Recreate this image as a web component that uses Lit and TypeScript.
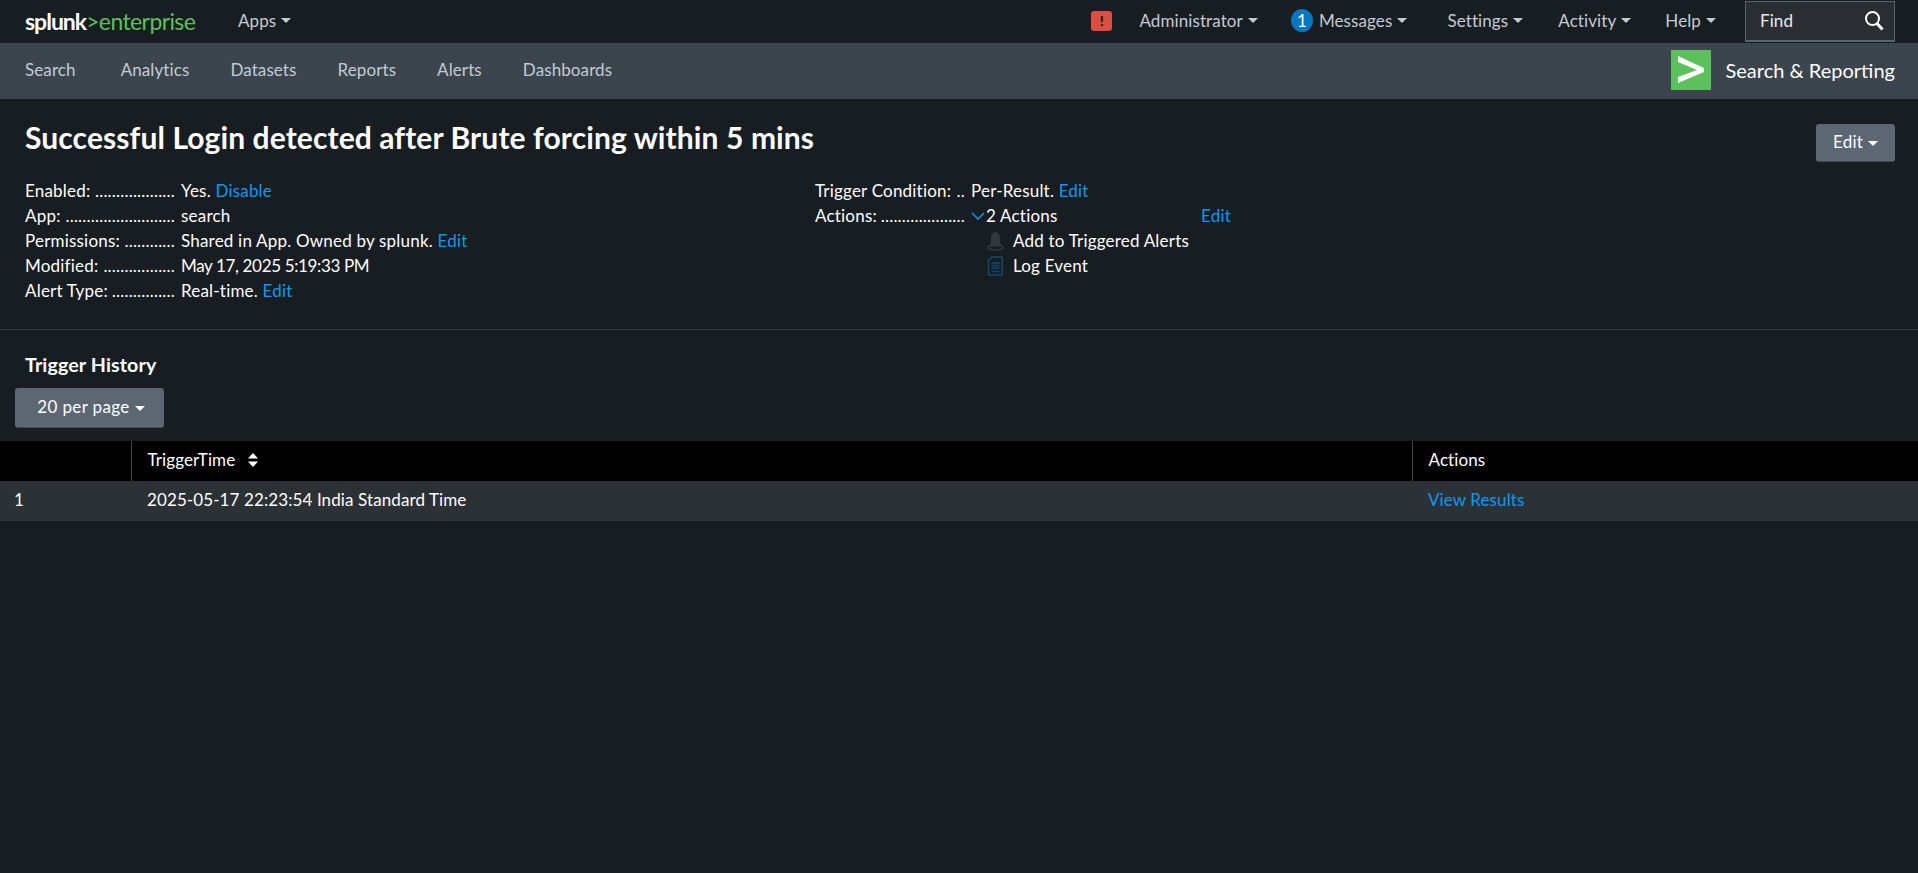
import { LitElement, html, css, svg } from "lit";
import { customElement } from "lit/decorators.js";

const caret = html`<span class="caret"></span>`;
const dots = (n: number) => ".".repeat(n);

const leftRows = [
  { label: "Enabled:", dots: 19, value: html`Yes. <a>Disable</a>` },
  { label: "App:", dots: 26, value: html`search` },
  { label: "Permissions:", dots: 12, value: html`Shared in App. Owned by splunk. <a>Edit</a>` },
  { label: "Modified:", dots: 17, value: html`<span class="tight">May 17, 2025 5:19:33 PM</span>` },
  { label: "Alert Type:", dots: 15, value: html`Real-time. <a>Edit</a>` },
];

const bell = svg`<svg width="17" height="20" viewBox="0 0 17 20"><path d="M8.5 1C5.5 1 4 3.5 4 6.5V10.500C4 12.500 3 14 1.500 15.500H15.500C14 14 13 12.500 13 10.500V6.500C13 3.500 11.500 1 8.500 1Z" fill="#33383c"/><ellipse cx="8.500" cy="16.500" rx="7.500" ry="2.500" fill="none" stroke="#33383c" stroke-width="1.500"/></svg>`;

const logIcon = svg`<svg width="17" height="20" viewBox="0 0 17 20" fill="none" stroke="#0f4c71" stroke-width="1.500"><path d="M5 1H15.200V19H1.500V4.500Z"/><path d="M4.500 7H12.500M4.500 9.500H12.500M4.500 12H12.500M4.500 15.500H12.500"/></svg>`;

@customElement("app-root")
export class AppRoot extends LitElement {
  static styles = css`
    :host {
      display: block;
      min-height: 873px;
      background: #171d21;
      color: #fff;
      font-family: Lato, "Liberation Sans", sans-serif;
      font-size: 17px;
      letter-spacing: 0.1px;
    }

    a {
      color: #0d99f2;
      text-decoration: none;
    }

    .caret {
      display: inline-block;
      width: 0;
      height: 0;
      margin-left: 5px;
      vertical-align: middle;
      border-left: 5px solid transparent;
      border-right: 5px solid transparent;
      border-top: 5px solid currentColor;
    }

    /* top bar */
    .topbar {
      display: flex;
      align-items: center;
      box-sizing: border-box;
      height: 43px;
      padding: 0 23px 2px 25px;
      color: #c3cbd4;
    }
    .logo {
      display: flex;
      align-items: baseline;
      width: 213px;
      font-size: 23px;
      letter-spacing: -0.6px;
    }
    .logo b {
      color: #fff;
      font-weight: 700;
      letter-spacing: -1px;
    }
    .logo span {
      color: #5cc05c;
    }
    .spacer {
      flex: 1;
    }
    .alert {
      display: flex;
      align-items: center;
      justify-content: center;
      width: 21px;
      height: 20px;
      margin-right: 27px;
      border-radius: 3px;
      background: #dc4e41;
      color: #171d21;
      font-size: 14px;
      font-weight: 900;
    }
    .menu {
      display: flex;
      align-items: center;
      margin-right: 34px;
      white-space: nowrap;
    }
    .menu.admin {
      margin-right: 33px;
    }
    .menu.messages {
      margin-right: 40px;
    }
    .menu.settings {
      margin-right: 35px;
    }
    .menu.last {
      margin-right: 29px;
    }
    .badge {
      display: flex;
      align-items: center;
      justify-content: center;
      width: 22px;
      height: 23px;
      margin-right: 6px;
      border-radius: 50%;
      background: #0877c1;
      color: #fff;
    }
    .find {
      display: flex;
      align-items: center;
      justify-content: space-between;
      box-sizing: border-box;
      width: 150px;
      height: 41px;
      margin: 2px 0 0;
      padding: 0 10px 2px 14px;
      border: 1px solid #596370;
      border-bottom-width: 2px;
      background: #2a2e33;
      color: #e8ebee;
    }

    /* app bar */
    .appbar {
      display: flex;
      align-items: center;
      box-sizing: border-box;
      height: 56px;
      padding: 0 23px 0 25px;
      background: #3c444d;
      color: #c3cbd4;
    }
    .appbar nav {
      display: flex;
      gap: 41px;
      margin-bottom: 3px;
    }
    .appbar nav span:first-child {
      margin-right: 4px;
    }
    .app-title {
      display: flex;
      align-items: center;
      gap: 15px;
      margin-bottom: 2px;
      color: #fff;
      font-size: 20px;
      letter-spacing: 0;
    }
    .app-mark {
      display: block;
      width: 40px;
      height: 40px;
    }

    /* details */
    .details {
      padding: 25px 23px 26px 25px;
      border-bottom: 1px solid #33393f;
      letter-spacing: 0.2px;
    }
    .title-row {
      display: flex;
      align-items: flex-start;
      justify-content: space-between;
      height: 54px;
    }
    h1 {
      margin: -1px 0 0;
      font-size: 30px;
      line-height: 28px;
      font-weight: 700;
      letter-spacing: 0.1px;
    }
    .btn {
      box-sizing: border-box;
      padding: 0 0 3px;
      border: 0;
      border-bottom: 1px solid #454c55;
      border-radius: 3px;
      background: #5c6773;
      color: #fff;
      font: inherit;
      letter-spacing: inherit;
    }
    .edit-btn {
      width: 79px;
      height: 38px;
    }
    .columns {
      display: grid;
      grid-template-columns: 790px 1fr;
    }
    .row {
      display: flex;
      height: 25px;
      line-height: 25px;
      white-space: nowrap;
    }
    .label {
      display: flex;
      justify-content: space-between;
      flex: none;
      width: 150px;
      margin-right: 6px;
    }
    .tight {
      letter-spacing: -0.35px;
    }
    .actions-col {
      display: flex;
      width: 260px;
      justify-content: space-between;
    }
    .action-count {
      display: flex;
    }
    .chevron {
      flex: none;
      display: block;
      align-self: center;
      margin-right: 1px;
    }
    .action {
      display: flex;
      align-items: center;
      gap: 9px;
      padding-left: 172px;
    }

    /* history */
    h2 {
      margin: 24px 0 12px 25px;
      font-size: 19.7px;
      line-height: 22px;
      font-weight: 700;
    }
    .per-page {
      display: block;
      width: 149px;
      height: 40px;
      margin: 0 0 13px 15px;
      padding-left: 3px;
      letter-spacing: 0.35px;
    }
    table {
      width: 100%;
      border-collapse: collapse;
      table-layout: fixed;
    }
    .col-index {
      width: 131px;
    }
    .col-time {
      width: 1281px;
    }
    th,
    td {
      box-sizing: border-box;
      height: 40px;
      padding: 0 0 3px 16px;
      text-align: left;
      font-weight: 400;
    }
    th:first-child,
    td:first-child {
      padding-left: 14px;
    }
    th {
      background: #000;
    }
    th + th {
      border-left: 1px solid #3c444d;
    }
    td {
      background: #2c3135;
    }
    .sort {
      margin-left: 8px;
      vertical-align: -1px;
    }
  `;

  render() {
    return html`
      <header class="topbar">
        <div class="logo"><b>splunk</b><span>&gt;enterprise</span></div>
        <div class="menu">Apps${caret}</div>
        <div class="spacer"></div>
        <div class="alert">!</div>
        <div class="menu admin">Administrator${caret}</div>
        <div class="menu messages"><span class="badge">1</span>Messages${caret}</div>
        <div class="menu settings">Settings${caret}</div>
        <div class="menu">Activity${caret}</div>
        <div class="menu last">Help${caret}</div>
        <div class="find">
          Find
          <svg width="20" height="21" viewBox="0 0 20 21" fill="none" stroke="#fff">
            <circle cx="8.500" cy="8.500" r="6.500" stroke-width="2" />
            <path d="M13 13.500L18.500 19.500" stroke-width="3" />
          </svg>
        </div>
      </header>

      <div class="appbar">
        <nav>
          <span>Search</span><span>Analytics</span><span>Datasets</span><span>Reports</span
          ><span>Alerts</span><span>Dashboards</span>
        </nav>
        <div class="spacer"></div>
        <div class="app-title">
          <svg class="app-mark" viewBox="0 0 40 40">
            <rect width="40" height="40" fill="#5cc05c" />
            <path d="M7 6L33 18V22L7 33V27L26 20L7 12Z" fill="#fff" />
          </svg>
          Search &amp; Reporting
        </div>
      </div>

      <section class="details">
        <div class="title-row">
          <h1>Successful Login detected after Brute forcing within 5 mins</h1>
          <button class="btn edit-btn">Edit${caret}</button>
        </div>
        <div class="columns">
          <div>
            ${leftRows.map(
              (r) => html`<div class="row">
                <div class="label"><span>${r.label}</span><span>${dots(r.dots)}</span></div>
                <div>${r.value}</div>
              </div>`,
            )}
          </div>
          <div>
            <div class="row">
              <div class="label"><span>Trigger Condition:</span><span>${dots(2)}</span></div>
              <div>Per-Result. <a>Edit</a></div>
            </div>
            <div class="row">
              <div class="label"><span>Actions:</span><span>${dots(20)}</span></div>
              <div class="actions-col">
                <span class="action-count">
                  <svg class="chevron" width="14" height="8" viewBox="0 0 14 8" fill="none" stroke="#0d99f2" stroke-width="1.500">
                    <path d="M1 1L7 7L13 1" />
                  </svg>
                  2 Actions
                </span>
                <a>Edit</a>
              </div>
            </div>
            <div class="row action">${bell}Add to Triggered Alerts</div>
            <div class="row action">${logIcon}Log Event</div>
          </div>
        </div>
      </section>

      <h2>Trigger History</h2>
      <button class="btn per-page">20 per page${caret}</button>

      <table>
        <colgroup>
          <col class="col-index" />
          <col class="col-time" />
          <col />
        </colgroup>
        <thead>
          <tr>
            <th></th>
            <th>
              TriggerTime
              <svg class="sort" width="10" height="14" viewBox="0 0 10 14" fill="#fff">
                <path d="M5 0L10 5.500H0Z" />
                <path d="M5 14L0 8.500H10Z" />
              </svg>
            </th>
            <th>Actions</th>
          </tr>
        </thead>
        <tbody>
          <tr>
            <td>1</td>
            <td>2025-05-17 22:23:54 India Standard Time</td>
            <td><a>View Results</a></td>
          </tr>
        </tbody>
      </table>
    `;
  }
}
